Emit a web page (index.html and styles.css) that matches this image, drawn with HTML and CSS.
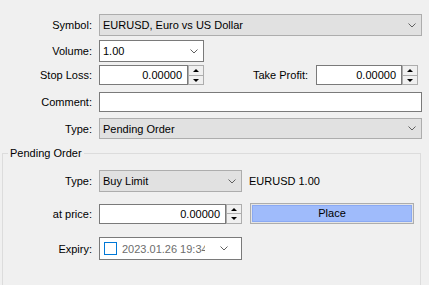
FILE: index.html
```html
<!DOCTYPE html>
<html>
<head>
    <meta charset="UTF-8">
    <title>Order</title>
    <link rel="stylesheet" href="styles.css">
</head>
<body>
<div class="dialog">
    <!-- main order fields -->
    <div class="row rowSymbol">
        <span class="lbl">Symbol:</span>
        <div class="combo grow">
            <span class="comboText">EURUSD, Euro vs US Dollar</span>
            <svg class="chev" width="8" height="5" viewBox="0 0 8 5"><path d="M0.5 0.5 L4 4 L7.5 0.5" fill="none" stroke="#606060"/></svg>
        </div>
    </div>
    <div class="row rowVolume">
        <span class="lbl">Volume:</span>
        <div class="combo editCombo volumeCombo">
            <span class="comboText">1.00</span>
            <svg class="chev" width="8" height="5" viewBox="0 0 8 5"><path d="M0.5 0.5 L4 4 L7.5 0.5" fill="none" stroke="#606060"/></svg>
        </div>
    </div>
    <div class="row rowStops">
        <span class="lbl">Stop Loss:</span>
        <div class="spinBox slBox">
            <div class="numInput">0.00000</div>
            <div class="spin"><span class="up"></span><span class="down"></span></div>
        </div>
        <span class="tpLabel">Take Profit:</span>
        <div class="spinBox tpBox">
            <div class="numInput">0.00000</div>
            <div class="spin"><span class="up"></span><span class="down"></span></div>
        </div>
    </div>
    <div class="row rowComment">
        <span class="lbl">Comment:</span>
        <div class="textInput grow"></div>
    </div>
    <div class="row rowType">
        <span class="lbl">Type:</span>
        <div class="combo grow">
            <span class="comboText">Pending Order</span>
            <svg class="chev" width="8" height="5" viewBox="0 0 8 5"><path d="M0.5 0.5 L4 4 L7.5 0.5" fill="none" stroke="#606060"/></svg>
        </div>
    </div>

    <!-- pending order group -->
    <fieldset class="group">
        <legend>Pending Order</legend>
        <div class="row gRowType">
            <span class="lbl gLbl">Type:</span>
            <div class="combo pendCombo">
                <span class="comboText">Buy Limit</span>
                <svg class="chev" width="8" height="5" viewBox="0 0 8 5"><path d="M0.5 0.5 L4 4 L7.5 0.5" fill="none" stroke="#606060"/></svg>
            </div>
            <span class="pendInfo">EURUSD 1.00</span>
        </div>
        <div class="row gRowPrice">
            <span class="lbl gLbl">at price:</span>
            <div class="spinBox priceBox">
                <div class="numInput">0.00000</div>
                <div class="spin"><span class="up"></span><span class="down"></span></div>
            </div>
            <div class="placeButton"><span>Place</span></div>
        </div>
        <div class="row gRowExpiry">
            <span class="lbl gLbl">Expiry:</span>
            <div class="dateBox">
                <span class="check"></span>
                <span class="dateText">2023.01.26 19:34</span>
                <svg class="chev" width="8" height="5" viewBox="0 0 8 5"><path d="M0.5 0.5 L4 4 L7.5 0.5" fill="none" stroke="#606060"/></svg>
            </div>
        </div>
    </fieldset>
</div>
</body>
</html>
```

FILE: styles.css
```css
html, body {
    margin: 0;
    padding: 0;
    background: #f0f0f0;
    overflow: hidden;
}

.dialog {
    width: 429px;
    height: 285px;
    padding: 14px 7px 0 0;
    box-sizing: border-box;
    overflow: hidden;
    font-family: "Liberation Sans", Arial, sans-serif;
    font-size: 11px;
    color: #000;
}

/* rows */
.row {
    display: flex;
    align-items: center;
}

.rowVolume { margin-top: 4px; }
.rowStops { margin-top: 3px; }
.rowComment { margin-top: 7px; }
.rowType { margin-top: 6px; }

.lbl {
    width: 92px;
    flex: none;
    text-align: right;
    margin-right: 7px;
}

.grow {
    flex: 1;
}

/* combo boxes */
.combo {
    height: 22px;
    box-sizing: border-box;
    display: flex;
    align-items: center;
    padding: 0 5px 0 3px;
    background: #e1e1e1;
    border: 1px solid #adadad;
}

.rowType .combo {
    height: 21px;
}

.comboText {
    flex: 1;
    white-space: nowrap;
    overflow: hidden;
}

.chev {
    flex: none;
    display: block;
}

.editCombo {
    background: #fff;
    border-color: #7a7a7a;
}

.volumeCombo {
    width: 105px;
}

.pendCombo {
    width: 143px;
}

/* numeric inputs with spinner */
.spinBox {
    display: flex;
    height: 20px;
}

.numInput {
    flex: 1;
    background: #fff;
    border: 1px solid #7a7a7a;
    text-align: right;
    padding-right: 5px;
    line-height: 18px;
}

.spin {
    width: 16px;
    flex: none;
    box-sizing: border-box;
    border: 1px solid #adadad;
    background: #f0f0f0;
    display: flex;
    flex-direction: column;
}

.spin span {
    flex: 1;
    position: relative;
}

.spin .up {
    border-bottom: 1px solid #adadad;
}

.spin .up::after,
.spin .down::after {
    content: "";
    position: absolute;
    left: 4px;
    top: 3px;
    border-left: 3px solid transparent;
    border-right: 3px solid transparent;
}

.spin .up::after {
    border-bottom: 3px solid #000;
}

.spin .down::after {
    top: 3px;
    border-top: 3px solid #000;
}

.slBox {
    width: 105px;
}

.tpLabel {
    margin-left: auto;
    margin-right: 8px;
}

.tpBox {
    width: 102px;
    margin-right: 4px;
}

.textInput {
    height: 20px;
    box-sizing: border-box;
    background: #fff;
    border: 1px solid #7a7a7a;
}

/* group box */
.group {
    margin: 8px 1px 0 2px;
    padding: 0;
    height: 140px;
    box-sizing: border-box;
    border: 1px solid #dcdcdc;
}

.group legend {
    margin-left: 5px;
    padding: 0 2px;
    line-height: 13px;
}

.gLbl {
    width: 89px;
}

.gRowType { margin-top: 10px; }
.gRowPrice { margin-top: 11px; }
.gRowExpiry { margin-top: 13px; }

.pendInfo {
    margin-left: 7px;
}

.priceBox {
    width: 143px;
}

.placeButton {
    width: 164px;
    height: 21px;
    margin-left: 8px;
    box-sizing: border-box;
    border: 1px solid #adadad;
    padding: 1px;
    background: #e5e5e5;
    display: flex;
}

.placeButton span {
    flex: 1;
    background: #9fbbfb;
    border: 1px solid #8aa9f3;
    text-align: center;
    line-height: 15px;
}

/* expiry date picker */
.dateBox {
    width: 143px;
    height: 23px;
    box-sizing: border-box;
    background: #fff;
    border: 1px solid #7a7a7a;
    display: flex;
    align-items: center;
    padding: 0 13px 0 4px;
}

.check {
    width: 13px;
    height: 13px;
    box-sizing: border-box;
    border: 1px solid #0078d7;
    flex: none;
}

.dateText {
    width: 83px;
    margin-left: 5px;
    overflow: hidden;
    white-space: nowrap;
    color: #6d6d6d;
    flex: none;
}

.dateBox .chev {
    margin-left: auto;
}
```
